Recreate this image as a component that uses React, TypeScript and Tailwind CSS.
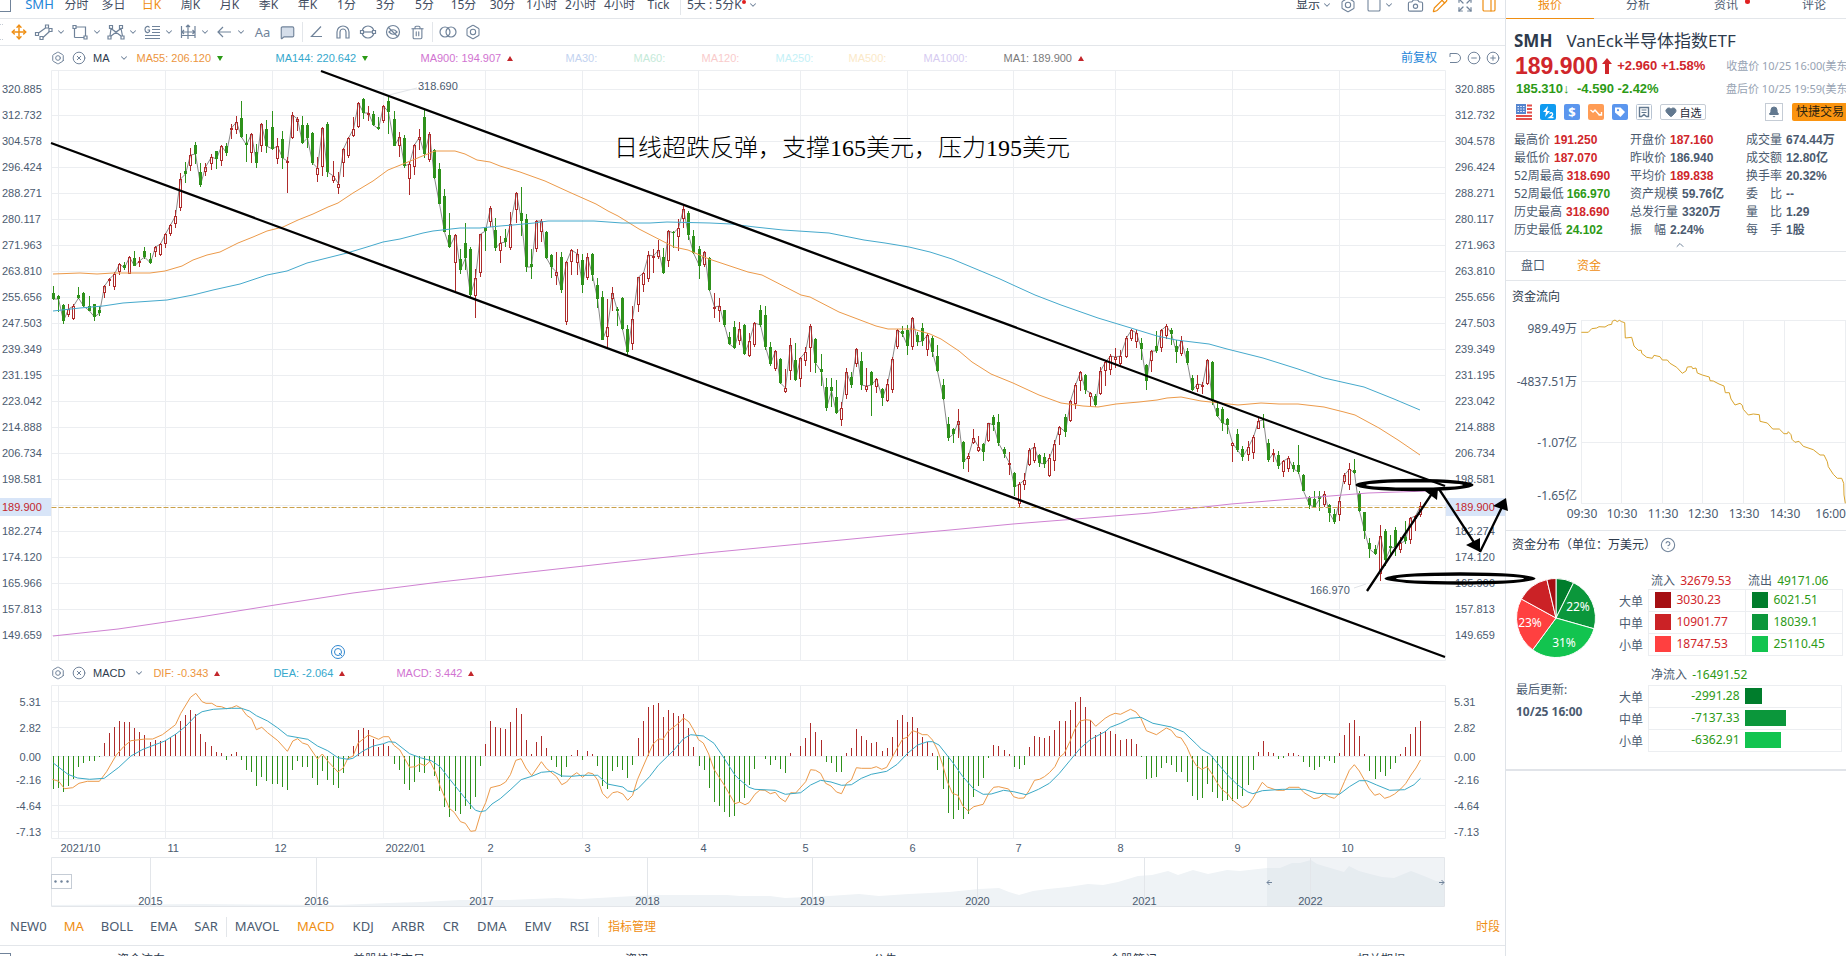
import type { ReactNode } from 'react'
import {
  Bell,
  Bolt,
  Camera,
  ChevronDown,
  ChevronUp,
  CircleMinus,
  CirclePlus,
  CircleQuestionMark,
  CircleX,
  Expand,
  Heart,
  MessageSquare,
  Move,
  PanelRight,
  Pencil,
  Square,
  Trash2,
} from 'lucide-react'

const STEP = 5.083
const LEFT = 51.5
const RIGHT = 1445.5
const ZERO = 756

const months = [
  { x: 58.5, label: '2021/10' },
  { x: 165.5, label: '11' },
  { x: 272.5, label: '12' },
  { x: 383.5, label: '2022/01' },
  { x: 485.5, label: '2' },
  { x: 582.5, label: '3' },
  { x: 698.5, label: '4' },
  { x: 800.5, label: '5' },
  { x: 907.5, label: '6' },
  { x: 1013.5, label: '7' },
  { x: 1115.5, label: '8' },
  { x: 1232.5, label: '9' },
  { x: 1339.5, label: '10' },
]

const prices = [
  '320.885', '312.732', '304.578', '296.424', '288.271', '280.117', '271.963', '263.810',
  '255.656', '247.503', '239.349', '231.195', '223.042', '214.888', '206.734', '198.581',
  '', '182.274', '174.120', '165.966', '157.813', '149.659',
]

const macdScale = [
  { y: 701.5, label: '5.31' },
  { y: 727.5, label: '2.82' },
  { y: 756.5, label: '0.00' },
  { y: 779.5, label: '-2.16' },
  { y: 805.5, label: '-4.64' },
  { y: 831.5, label: '-7.13' },
]

// direction, then high / body top / body bottom / low in thirds of a pixel under base
const sessions = [
  {
    base: 60,
    rows: `g679,699,718,720 g705,708,718,757 g733,735,782,791 r731,748,765,772 r731,739,776,781 g682,705,713,716
g696,698,737,740 g709,739,752,754 g731,732,772,784 g738,750,758,769 r675,679,698,713 r655,658,664,678
r637,641,680,689 r609,611,637,645 g605,616,623,630 r588,592,641,643 g573,594,617,619 r590,604,610,620
g562,573,592,598 g580,597,610,613 r558,562,577,592 r550,552,584,587 r518,523,553,565 r491,495,523,527
r450,469,493,503 r340,357,443,452 g306,334,341,368 r264,286,317,332 g246,255,282,311 g308,335,374,382
r310,321,336,347 r281,292,313,329 g273,273,296,326 r256,259,304,317 g249,258,278,287 r191,204,208,236
r168,187,211,221 g123,175,232,235 g222,248,254,305 r220,223,279,308 g252,276,310,323 r190,192,259,275
g181,208,258,278 g153,202,268,271 r235,259,298,312 g214,237,293,326 r290,304,310,398 r156,165,235,237
r172,178,185,212 g168,196,250,252 g190,195,234,265 g216,219,308,315 r290,325,344,365 r200,205,322,347
g187,192,335,350 r302,349,362,369 r337,371,385,402 r264,268,310,350 r231,235,287,293 r172,208,227,230
r126,129,200,203 g115,118,158,178 r138,159,166,182 g152,163,194,199 g171,200,206,209 r136,139,182,188
g106,123,155,222 g154,178,257,259 r217,230,259,290 g225,235,318,325 r306,313,356,406 r252,256,322,345
r208,231,241,270 g150,171,283,293 r216,223,301,307 g267,270,354,358 g310,328,431,432 g388,408,515,517
g460,526,560,564 r522,526,610,694 g568,597,629,643 g489,549,593,630 g562,567,705,710 r628,655,707,773
r521,523,638,652 g501,503,512,574 r439,444,485,502`,
  },
  {
    base: 160,
    rows: `g175,210,265,273 r229,250,274,308 g207,234,246,260 r156,193,263,270 r97,100,151,190 g80,158,184,227
g162,178,320,337 g267,313,321,356 r181,184,266,275 r178,184,217,245 g213,215,293,296 g281,284,320,355
r275,336,348,376 g277,291,390,399 r302,306,487,496 r267,271,307,344 r266,281,310,344 g281,299,374,398
r278,291,354,360 g280,283,346,363 g355,375,416,444 g394,411,539,541 r418,502,532,563 r382,399,418,452
g441,446,452,499 g412,414,506,509 g496,507,575,584 r437,478,552,571 r350,352,436,457 r335,338,376,396
r273,284,358,367 r266,289,295,340 r240,271,290,296 g263,291,338,341 r211,214,303,322 g213,216,220,263
r177,205,231,274 r139,147,178,205 g153,158,224,239 g210,227,280,283 g258,267,318,356 r273,276,316,320
g291,295,389,394 r399,440,445,473 r414,439,452,485 g449,451,496,500 g515,532,551,554 g483,500,563,567
r487,507,542,554 g492,494,581,584 r520,542,589,592 r486,489,554,562 g436,451,495,502 g438,464,560,570
g547,561,613,617 r571,574,628,634 g595,597,670,672 r628,683,697,700 r535,556,634,660 g550,599,659,663
r592,595,656,680 r562,577,604,619 r493,498,563,635 g535,537,610,640 g583,628,635,677 g655,680,745,754
g655,680,692,740 g660,711,758,761 r727,745,779,799 r623,636,704,718 g636,651,674,683 r563,568,613,622
g577,604,676,689 r623,677,691,697 g632,636,676,767 r653,658,681,700 g685,687,715,738 r657,671,724,727
r592,598,691,700 r507,511,562,566 g498,514,521,532 g496,511,557,586 r472,475,560,569 g516,526,545,557
g490,505,544,558 r520,525,571,589 g529,535,575,590 g556,588,634,637 g658,676,718,721 g771,793,835,842
g804,808,821,848 r747,784,796,833 g843,846,907,926 r878,889,898,935 r808,835,850,853 r827,862,874,877
g850,853,875,902 r788,790,842,847 g766,771,796,812 g763,787,850,857`,
  },
  {
    base: 280,
    rows: `g501,507,522,533 r516,549,556,585 g575,578,621,648 r606,611,671,680 r580,601,614,631 r505,510,555,558
r489,501,543,549 g521,526,549,560 g519,530,551,563 r523,535,587,590 r480,493,542,573 r438,441,465,495
g403,411,457,470 r360,363,424,427 r308,314,372,386 r273,276,304,333 g282,285,329,342 r336,340,350,378
g341,347,374,382 r261,273,341,344 r241,247,272,318 r222,229,271,284 r205,232,240,263 r210,228,253,257
r168,175,231,235 r146,151,178,184 r150,160,187,203 g174,188,208,239 g252,255,304,329 r210,213,243,276
g153,199,214,219 r147,151,203,217 r132,139,167,176 g144,150,163,195 g180,199,217,248 r168,183,221,227
g204,212,250,256 g286,293,329,334 r286,313,328,335 r305,316,322,342 r237,240,311,316 g243,245,363,375
g370,383,407,412 g381,386,430,454 g414,417,436,461 r486,490,499,545 g446,462,509,517 g497,507,532,544
r484,500,526,542 r466,470,519,536 r415,424,446,448 g403,417,420,443 g478,490,541,545 r507,519,526,545
g514,524,557,566 r540,544,575,590 r529,534,568,576 g547,555,566,577 g495,556,577,582 g583,586,632,634
g647,652,674,686 g634,658,680,682 g634,648,656,692 r634,643,676,681 g671,674,700,726 g686,702,727,732
r652,664,706,722 r580,586,607,612 r549,566,614,630 g538,570,579,582 g634,638,694,696 g697,697,754,776
g774,788,806,833 g796,808,821,826 r736,769,883,904 g748,752,841,858 g765,798,805,831 g742,750,802,829
r772,790,810,819 g723,770,783,791 r710,714,781,791 r705,709,716,754 r667,678,706,711`,
  },
]

const candles = sessions
  .flatMap(({ base, rows }) =>
    rows.split(/\s+/).map((row) => ({
      up: row[0] === 'r',
      y: row.slice(1).split(',').map((v) => Math.round(base + Number(v) / 3)),
    })),
  )
  .map((c, i) => ({ ...c, x: Math.round(53 + STEP * i) + 0.5 }))

const closeLine = candles.map((c) => `${c.x},${c.up ? c.y[1] : c.y[2]}`).join(' ')

const ma55 =
  '53,274 80,273 97,274 113,273 150,273 165,271 182,266 193,260 207,255 220,252 238,243 253,237 267,231 283,227 298,220 313,214 328,207 338,203 353,193 373,181 388,170 403,164 420,157 435,151 455,151 465,154 477,160 490,162 500,166 520,172 545,181 569,192 596,204 608,211 618,216 639,229 674,247 688,250 709,259 748,272 762,275 801,295 810,297 839,312 876,326 888,329 913,329 930,334 941,339 959,351 972,362 991,374 1013,383 1039,395 1061,403 1083,406 1098,407 1116,404 1139,402 1157,400 1167,398 1181,397 1201,401 1220,403 1238,405 1261,403 1279,404 1298,404 1324,407 1344,412 1355,415 1379,428 1398,440 1420,455'
const ma144 =
  '53,311 80,308 103,306 123,303 167,300 193,295 213,290 240,284 267,275 287,271 307,263 327,258 347,253 367,247 383,242 400,239 423,233 433,231 460,228 480,228 500,226 513,225 534,223 548,221 594,221 622,223 650,223 667,222 710,223 731,224 755,227 783,230 829,233 864,240 885,243 909,247 930,252 952,259 976,269 1000,279 1013,285 1035,295 1061,305 1098,318 1131,328 1157,336 1176,340 1209,344 1227,349 1263,358 1298,369 1324,378 1364,387 1394,399 1420,410'
const ma900 =
  '53,636 118,629 200,617 275,605 353,593 440,582 530,572 620,562 706,553 800,544 883,536 950,530 1013,524 1076,519 1150,513 1231,504 1305,498 1368,493 1427,491'

// one value per session, thirds of a pixel under y = 640
const histogram = `446 445 455 437 416 380 368 362 362 350 309 280 262 243 246 247 265 276 284 306 300 303 299 291 282 242 226
211 221 282 307 318 336 339 359 343 337 361 389 396 437 410 423 432 432 442 449 389 362 380 380 413 435 393 419 434
443 398 358 318 270 264 270 297 320 312 318 372 389 432 449 425 396 398 366 407 453 500 530 512 523 497 506 470 377
313 243 261 264 268 246 205 222 300 343 306 289 324 359 380 411 380 346 330 359 333 342 377 437 446 392 380 389 413
374 294 243 202 194 190 230 210 219 229 223 264 321 377 390 444 486 498 516 530 527 487 475 436 387 349 357 374 359
386 398 340 349 319 294 250 277 301 365 370 395 395 339 325 267 289 300 309 307 334 324 292 241 225 247 231 265 291
307 339 389 446 518 536 511 536 521 470 437 413 353 315 319 331 343 380 387 374 321 289 292 295 289 270 243 243 210
186 171 201 240 286 276 274 273 282 300 297 297 312 350 416 413 411 383 369 374 396 396 425 467 479 473 432 456 473
482 479 483 476 467 434 391 337 304 337 339 357 353 340 340 345 366 380 390 380 357 362 370 340 285 250 241 289 342
392 416 395 408 386 368 342 321 282 262 243`
  .split(/\s+/)
  .map((v) => Math.round(640 + Number(v) / 3))

const spread = (points: string, x0: number, kx: number, y0: number) =>
  points
    .split(' ')
    .map((p) => {
      const [x, y] = p.split(',').map(Number)
      return `${(x0 + x / kx).toFixed(1)},${(y0 + y / 3).toFixed(1)}`
    })
    .join(' ')

const dif =
  spread(
    '108,418 121,424 133,446 150,443 163,430 180,424 205,424 220,395 240,345 255,320 270,302 300,297 315,297 335,284 362,254 373,220 393,172 404,160 417,185 425,190 437,190 447,199 457,200 467,206 478,203 488,197 498,205 509,226 519,236 529,269 540,262 552,278 573,302 593,334 604,303 614,296 624,309 635,314 655,357 665,342 676,363 697,396 708,384 718,354 728,349 739,309 760,285 781,298 791,290 802,290 812,315 825,330 845,382 857,380 867,371 877,377 887,364 898,396 908,439 927,505 937,517 950,545 960,550 971,574 981,572 991,523 1002,488 1012,443 1032,436 1043,426 1053,404 1064,361 1075,356 1085,384 1097,407 1117,365 1127,385 1148,410 1159,434 1169,426 1179,409 1190,398 1202,412 1213,398 1223,401 1233,420 1243,460 1253,475 1264,458 1274,455 1285,462 1295,481 1305,466 1315,419 1337,345 1347,313 1358,297 1368,298 1378,274 1400,250 1410,234 1421,245 1431,270 1441,299 1451,309 1462,342 1473,388 1494,435 1516,491 1526,486',
    0, 2.063, 640,
  ) +
  ' ' +
  spread(
    '10,494 18,488 30,463 40,450 50,451 61,461 71,457 80,474 91,485 102,458 112,459 132,425 142,389 152,391 162,400 172,430 183,438 194,456 204,461 214,430 224,420 234,383 244,385 264,385 274,380 285,388 295,382 316,325 327,297 337,291 347,272 357,277 367,284 377,284 387,300 397,330 407,373 417,425 427,460 438,466 448,498 459,513 470,500 489,493 500,460 510,442 520,440 540,447 550,470 560,475 571,474 581,452 592,421 602,418 612,410 622,398 633,380 642,352 652,340 663,305 673,268 684,243 695,239 705,241 715,259 734,235 744,226 754,220 765,223 785,208 796,216 806,235 817,272 837,284 857,264 867,271 877,290 887,294 898,320 908,354 918,378 928,388 939,380 949,402 960,430 970,450 980,461 990,480 1010,503 1021,496 1031,475 1050,427 1060,441 1080,451 1094,451 1104,442 1124,442 1134,458 1154,476 1164,473 1174,461 1184,470 1195,475 1205,460 1215,425 1225,391 1235,374 1245,393 1265,446 1276,466 1286,461 1296,475 1306,470 1316,462 1328,447 1338,431 1349,405 1359,384 1368,360',
    740, 2.0103, 640,
  )

const dea =
  spread(
    '110,369 140,403 160,414 185,418 215,415 245,382 270,348 295,328 340,303 362,283 383,259 404,227 417,215 440,208 478,205 498,205 515,213 529,227 552,243 573,264 593,287 635,298 655,318 676,332 697,353 718,358 728,355 750,332 770,318 791,311 802,305 815,307 845,341 867,353 890,362 908,380 927,416 947,452 967,488 981,511 991,515 1002,512 1015,492 1032,476 1054,448 1075,419 1097,409 1117,397 1140,394 1159,408 1180,409 1202,406 1233,406 1253,432 1285,441 1295,453 1305,455 1316,446 1340,410 1358,376 1389,332 1410,296 1425,284 1451,288 1473,310 1494,355 1516,405',
    0, 2.063, 640,
  ) +
  ' ' +
  spread(
    '0,420 18,442 30,448 71,451 91,463 122,458 142,435 162,421 183,426 204,436 224,434 244,415 264,403 295,394 316,373 337,340 357,315 377,305 387,305 400,315 427,366 448,410 470,447 489,463 505,462 530,451 550,455 575,464 600,448 622,430 642,400 663,362 684,325 705,298 734,275 744,262 765,250 785,235 806,232 830,250 867,261 892,276 918,313 928,328 945,343 960,370 980,405 1000,434 1021,456 1031,461 1050,452 1090,448 1134,448 1160,460 1205,463 1225,440 1245,422 1260,422 1280,435 1306,451 1336,449 1355,434 1368,415',
    740, 2.0103, 640,
  )

const flowLine = spread(
  '244,157 265,157 275,146 290,144 297,140 315,141 325,135 335,133 337,124 345,120 352,125 358,121 365,125 374,128 376,174 395,172 402,198 415,211 424,211 425,220 440,232 457,235 462,226 480,230 487,240 502,240 510,250 530,262 547,280 558,273 562,261 575,260 578,266 588,264 592,279 607,285 628,291 630,302 640,303 657,312 672,318 676,338 688,338 693,357 705,375 720,370 727,376 730,388 745,405 760,402 778,404 780,424 802,429 818,447 838,447 852,461 862,461 865,455 873,464 876,478 885,487 897,484 910,499 940,509 960,525 972,525 982,545 985,560 1000,583 1012,595 1025,595 1031,610 1032,645 1036,670',
  -6, 3, 280,
)

const years = [
  { x: 150.5, label: '2015' },
  { x: 316.5, label: '2016' },
  { x: 481.5, label: '2017' },
  { x: 647.5, label: '2018' },
  { x: 812.5, label: '2019' },
  { x: 977.5, label: '2020' },
  { x: 1144.5, label: '2021' },
  { x: 1310.5, label: '2022' },
]

const history =
  '52,905 200,904 338,905 388,903 422,902 460,900 509,900 557,898 581,899 616,897 654,895 727,895 740,896 770,896 785,898 829,896 859,894 879,896 909,894 949,892 979,889 999,888 1009,892 1019,895 1033,891 1048,889 1068,887 1088,884 1103,885 1118,882 1138,876 1152,875 1168,871 1178,875 1193,870 1208,874 1227,870 1240,871 1267,868 1280,868 1292,863 1300,863 1311,860 1317,864 1327,867 1344,872 1349,866 1359,871 1370,874 1382,877 1394,878 1411,871 1424,876 1436,881 1445,881'

const periods = ['日K', '周K', '月K', '季K', '年K', '1分', '3分', '5分', '15分', '30分', '1小时', '2小时', '4小时', 'Tick']

const averages = [
  { text: 'MA55: 206.120', style: 'w-[139px] text-[#ec9540]', trend: 'down' },
  { text: 'MA144: 220.642', style: 'w-[145px] text-[#35a8cd]', trend: 'down' },
  { text: 'MA900: 194.907', style: 'w-[145px] text-[#d174d1]', trend: 'up' },
  { text: 'MA30:', style: 'w-[68px] text-[#c3d3f0]' },
  { text: 'MA60:', style: 'w-[68px] text-[#c5ead9]' },
  { text: 'MA120:', style: 'w-[74px] text-[#f9cbcb]' },
  { text: 'MA250:', style: 'w-[73px] text-[#c5f1f7]' },
  { text: 'MA500:', style: 'w-[75px] text-[#fbe9c8]' },
  { text: 'MA1000:', style: 'w-[80px] text-[#d6cbf1]' },
  { text: 'MA1: 189.900', style: 'text-[#7a7a7a]', trend: 'up' },
]

const macdLegend = [
  { text: 'DIF: -0.343', style: 'w-[120px] text-[#ec9540]' },
  { text: 'DEA: -2.064', style: 'w-[123px] text-[#35a8cd]' },
  { text: 'MACD: 3.442', style: 'text-[#d174d1]' },
]

const RED = 'text-[#d0262b]'
const GREEN = 'text-[#2c9a16]'
const SLATE = 'text-[#4b5b70]'

const quotes = [
  [
    { name: '最高价', gap: 'ml-1', value: '191.250', color: RED },
    { name: '最低价', gap: 'ml-1', value: '187.070', color: RED },
    { name: '52周最高', gap: 'ml-[3px]', value: '318.690', color: RED },
    { name: '52周最低', gap: 'ml-[3px]', value: '166.970', color: GREEN },
    { name: '历史最高', gap: 'ml-1', value: '318.690', color: RED },
    { name: '历史最低', gap: 'ml-1', value: '24.102', color: GREEN },
  ],
  [
    { name: '开盘价', gap: 'ml-1', value: '187.160', color: RED },
    { name: '昨收价', gap: 'ml-1', value: '186.940', color: SLATE },
    { name: '平均价', gap: 'ml-1', value: '189.838', color: RED },
    { name: '资产规模', gap: 'ml-1', value: '59.76亿', color: SLATE },
    { name: '总发行量', gap: 'ml-1', value: '3320万', color: SLATE },
    { name: '振　幅', gap: 'ml-1', value: '2.24%', color: SLATE },
  ],
  [
    { name: '成交量', gap: 'ml-1', value: '674.44万', color: SLATE },
    { name: '成交额', gap: 'ml-1', value: '12.80亿', color: SLATE },
    { name: '换手率', gap: 'ml-1', value: '20.32%', color: SLATE },
    { name: '委　比', gap: 'ml-1', value: '--', color: SLATE },
    { name: '量　比', gap: 'ml-1', value: '1.29', color: SLATE },
    { name: '每　手', gap: 'ml-1', value: '1股', color: SLATE },
  ],
]

const distribution = [
  { name: '大单', inflow: '3030.23', inColor: 'bg-[#a50f12]', outflow: '6021.51', outColor: 'bg-[#007d2c]' },
  { name: '中单', inflow: '10901.77', inColor: 'bg-[#cb2226]', outflow: '18039.1', outColor: 'bg-[#0b973b]' },
  { name: '小单', inflow: '18747.53', inColor: 'bg-[#ff4040]', outflow: '25110.45', outColor: 'bg-[#12c44f]' },
]

const netFlow = [
  { name: '大单', value: '-2991.28', bar: 'bg-[#007d2c]', width: 17 },
  { name: '中单', value: '-7137.33', bar: 'bg-[#0b973b]', width: 41 },
  { name: '小单', value: '-6362.91', bar: 'bg-[#12c44f]', width: 36 },
]

const pie = [
  { value: 6021.51, color: '#007d2c' },
  { value: 18039.1, color: '#0b973b' },
  { value: 25110.45, color: '#12c44f' },
  { value: 18747.53, color: '#ff4040' },
  { value: 10901.77, color: '#cb2226' },
  { value: 3030.23, color: '#a50f12' },
]

function Chevron() {
  return <ChevronDown className="size-[10px] shrink-0 text-[#70839a]" strokeWidth={2.5} />
}

function Trend({ up }: { up: boolean }) {
  return (
    <svg className="ml-[6px] inline-block h-[5px] w-[6px]" viewBox="0 0 6 5">
      {up ? <path d="M3 0 6 5H0Z" fill="#c3262b" /> : <path d="M0 0H6L3 5Z" fill="#2c9a16" />}
    </svg>
  )
}

function Tool({ label, children, menu }: { label: string; children: ReactNode; menu?: boolean }) {
  return (
    <button
      type="button"
      aria-label={label}
      className={menu ? 'flex w-9 shrink-0 items-center gap-[2px]' : 'flex w-[25px] shrink-0 items-center justify-center'}
    >
      {children}
      {menu && <Chevron />}
    </button>
  )
}

function Glyph({ children }: { children: ReactNode }) {
  return (
    <svg className="h-4 w-5 shrink-0" viewBox="0 0 20 16" fill="none" stroke="#70839a" strokeWidth="1.2">
      {children}
    </svg>
  )
}

function TopBar() {
  return (
    <div className="flex h-[19px] items-end overflow-hidden border-b border-[#e3e6ea]">
      <div className="flex h-[26px] w-full shrink-0 items-center text-[12px] text-[#3f4c5f]">
        <span className="-ml-px h-[14px] w-[12px] shrink-0 border border-[#70839a]" />
        <button type="button" className="ml-[10px] w-[37px] shrink-0 text-[13px] text-[#1f86d8]">SMH</button>
        <button type="button" className="w-[37px] shrink-0">分时</button>
        <button type="button" className="w-[37px] shrink-0">多日</button>
        {periods.map((period) => (
          <button
            type="button"
            key={period}
            className={period === '日K' ? 'w-[39px] shrink-0 text-[#ef8e12]' : 'w-[39px] shrink-0'}
          >
            {period}
          </button>
        ))}
        <span className="ml-[2px] h-5 w-px shrink-0 bg-[#e3e6ea]" />
        <button type="button" className="relative ml-[6px] flex shrink-0 items-center gap-[6px]">
          5天 : 5分K
          <Chevron />
          <span className="absolute top-1 right-3 size-[4px] rounded-full bg-[#e02020]" />
        </button>
        <div className="ml-auto flex shrink-0 items-center pr-[8px] text-[#70839a]">
          <button type="button" className="flex items-center gap-[2px] text-[#2d3a4c]">
            显示
            <Chevron />
          </button>
          <button type="button" aria-label="设置" className="ml-[8px]"><Bolt className="size-4" strokeWidth={1.6} /></button>
          <button type="button" aria-label="布局" className="ml-[10px] flex items-center gap-[2px]">
            <Square className="size-4" strokeWidth={1.6} />
            <Chevron />
          </button>
          <button type="button" aria-label="截图" className="ml-[13px]"><Camera className="size-[17px]" strokeWidth={1.6} /></button>
          <button type="button" aria-label="画线" className="ml-[8px]"><Pencil className="size-4 text-[#ef8e12]" strokeWidth={1.8} /></button>
          <button type="button" aria-label="全屏" className="ml-[9px]"><Expand className="size-4" strokeWidth={1.8} /></button>
          <button type="button" aria-label="侧栏" className="ml-[8px]"><PanelRight className="size-4 text-[#ef8e12]" strokeWidth={1.8} /></button>
        </div>
      </div>
    </div>
  )
}

function ToolBar() {
  return (
    <div className="flex h-[27px] items-center overflow-hidden border-b border-[#e3e6ea] text-[#70839a]">
      <span className="h-4 w-[3px] shrink-0 border-y border-dotted border-[#c5ccd5]" />
      <button type="button" aria-label="移动" className="mr-[3px] flex w-[28px] shrink-0 justify-center pl-[3px]">
        <Move className="size-4 text-[#ef8e12]" strokeWidth={2.2} />
      </button>
      <Tool label="线段" menu>
        <Glyph>
          <path d="M4.500 9 11.500 4M9 13.500 15.500 7.500" />
          <path d="M1.500 8.500h3v3h-3zM11.500 1h3v3h-3zM6 12.500h3v3H6zM15 4.500h3v3h-3z" />
        </Glyph>
      </Tool>
      <Tool label="形状" menu>
        <Glyph>
          <path d="M4.500 4.500v9M6 3h9.500v9M4.500 13.500H14" />
          <path d="M3 1.500h3v3H3zM14 12h3v3h-3z" />
        </Glyph>
      </Tool>
      <Tool label="形态" menu>
        <Glyph>
          <path d="M4 12 5 4.500 10 8 15 4.500 16.500 12M5 4.500 15 12M15 4.500 5 12" />
          <path d="M3.500 1.500h3v3h-3zM13.500 1.500h3v3h-3zM2 12h3v3H2zM15 12h3v3h-3z" />
        </Glyph>
      </Tool>
      <Tool label="斐波那契" menu>
        <Glyph>
          <path d="M10 2.500h8M10 5.500h8M10 8.500h8M3 11.500h15M3 14.500h15" />
          <path d="M7.500 3.500C6 1.500 3 2.500 3 5.500s3 4 4.500 2V6H5.500" />
        </Glyph>
      </Tool>
      <Tool label="测量" menu>
        <Glyph>
          <path d="M3.500 2v12M17 2v12M10 1v14M3.500 8H17M3 11.500h14M8 3l2-2 2 2M6 6 4 8l2 2M14.500 6l2 2-2 2" />
        </Glyph>
      </Tool>
      <Tool label="箭头" menu>
        <Glyph>
          <path d="M4 8h13M9 3 4 8l5 5" />
        </Glyph>
      </Tool>
      <button type="button" className="w-[25px] shrink-0 text-[13px] leading-4">Aa</button>
      <Tool label="标注"><MessageSquare className="size-[15px] fill-[#d5deea]" strokeWidth={1.8} /></Tool>
      <span className="mx-[2px] h-5 w-px shrink-0 bg-[#e3e6ea]" />
      <Tool label="角度"><Glyph><path d="M13 2.500 3.500 12.500H14" /></Glyph></Tool>
      <Tool label="磁吸">
        <Glyph><path d="M4 14V8a6 6 0 0 1 12 0v6h-3V8a3 3 0 0 0-6 0v6Z" /></Glyph>
      </Tool>
      <Tool label="连续画线">
        <Glyph>
          <circle cx="10" cy="8" r="6" />
          <path d="M5 8h10" />
          <path d="M2.500 6.500h3v3h-3zM14.500 6.500h3v3h-3z" fill="#fff" />
        </Glyph>
      </Tool>
      <Tool label="隐藏画线">
        <Glyph>
          <circle cx="10" cy="8" r="6.500" />
          <path d="M6 8q4-4.500 8 0-4 4.500-8 0ZM5 3l10 10" />
        </Glyph>
      </Tool>
      <Tool label="删除"><Trash2 className="size-[15px]" strokeWidth={1.8} /></Tool>
      <span className="mx-[2px] h-5 w-px shrink-0 bg-[#e3e6ea]" />
      <Tool label="叠加">
        <Glyph>
          <circle cx="7" cy="8" r="5" />
          <circle cx="13" cy="8" r="5" />
        </Glyph>
      </Tool>
      <Tool label="画线设置"><Bolt className="size-4" strokeWidth={1.6} /></Tool>
    </div>
  )
}

function LegendHead({ name }: { name: string }) {
  return (
    <>
      <button type="button" aria-label={`${name} 设置`} className="shrink-0"><Bolt className="size-[14px] text-[#70839a]" strokeWidth={1.7} /></button>
      <button type="button" aria-label={`关闭 ${name}`} className="ml-[7px] shrink-0"><CircleX className="size-[14px] text-[#70839a]" strokeWidth={1.7} /></button>
      <button type="button" className="ml-[7px] flex shrink-0 items-center gap-[9px] text-[#2d3a4c]">
        {name}
        <Chevron />
      </button>
    </>
  )
}

function PriceChart() {
  return (
    <svg
      className="block w-full overflow-visible"
      viewBox="0 70 1505 591"
      fontFamily="Liberation Sans, sans-serif"
      fontSize="11"
      fill="#4b5b70"
    >
      <g stroke="#eceef1">
        {months.map((m) => <path key={m.x} d={`M${m.x} 70V660`} />)}
        {prices.map((_, i) => <path key={i} d={`M${LEFT} ${89.5 + 26 * i}H${RIGHT}`} />)}
        <path d={`M${LEFT} 70.500H${RIGHT}V660.500H${LEFT}Z`} fill="none" />
      </g>
      {prices.map((price, i) => (
        <g key={i}>
          <text x="2" y={93 + 26 * i}>{price}</text>
          <text x="1455" y={93 + 26 * i}>{price}</text>
        </g>
      ))}
      <path d="M0 498H51V516H0ZM1446 498H1505V516H1446Z" fill="#d8e5f8" />
      <g fill="#c3262b">
        <text x="2" y="511">189.900</text>
        <text x="1455" y="511">189.900</text>
      </g>

      <polyline points={closeLine} fill="none" stroke="#8a8a8a" />
      {candles.map(({ up, x, y: [high, top, bottom, low] }) =>
        up ? (
          <g key={x} stroke="#ae2b2b" fill="none">
            <path d={`M${x} ${high}V${top}M${x} ${bottom}V${low}`} />
            <rect x={x - 1} y={top + 0.5} width="2" height={Math.max(bottom - top - 1, 1)} />
          </g>
        ) : (
          <g key={x} fill="#2e911b">
            <rect x={x - 0.5} y={high} width="1" height={low - high} />
            <rect x={x - 1.5} y={top} width="3" height={Math.max(bottom - top, 1)} />
          </g>
        ),
      )}
      <g fill="none">
        <polyline points={ma55} stroke="#ec9a4a" />
        <polyline points={ma144} stroke="#45a9cc" />
        <polyline points={ma900} stroke="#cf82d2" />
        <path d={`M${LEFT} 507.500H${RIGHT}`} stroke="#cba14a" strokeDasharray="5 2" />
        <path d="M389 95 417 88M1354 588 1366 584" stroke="#e1e4e8" />
      </g>
      <text x="418" y="90">318.690</text>
      <text x="1310" y="594">166.970</text>
      <g fill="none" stroke="#2f86cf">
        <circle cx="338" cy="652" r="6.500" />
        <circle cx="338" cy="652" r="3.500" />
        <path d="m339 653 3 3" />
      </g>

      <g stroke="#000" strokeWidth="2.300" fill="none">
        <path d="M321 71 1445 486M51 143 1445 657" />
        <path d="M1367 591 1433 492M1439 489 1477 547M1480 552 1503 505" />
      </g>
      <g fill="#000" fillRule="evenodd">
        <path d="M1438 488 1425 491 1437 500ZM1480 552 1466 545 1480 538ZM1506 498 1493 506 1508 511Z" />
        <path d="M1355.500 485a59 6.300 0 0 1 118 0a59 6.300 0 0 1-118 0ZM1366 485a48.500 2.600 0 0 0 97 0a48.500 2.600 0 0 0-97 0Z" />
        <path d="M1384.500 578.500a75.500 6.200 0 0 1 151 0a75.500 6.200 0 0 1-151 0ZM1396 578.500a64 2.700 0 0 0 128 0a64 2.700 0 0 0-128 0Z" />
      </g>
      <text
        x="614"
        y="156"
        fontSize="24"
        fontWeight="300"
        fill="#000"
        fontFamily="Liberation Serif, Noto Sans CJK SC, serif"
      >
        日线超跌反弹，支撑<tspan fontWeight="400">165</tspan>美元，压力<tspan fontWeight="400">195</tspan>美元
      </text>
    </svg>
  )
}

function MacdChart() {
  return (
    <svg
      className="block w-full"
      viewBox="0 685 1505 172"
      fontFamily="Liberation Sans, sans-serif"
      fontSize="11"
      fill="#4b5b70"
    >
      <g stroke="#eceef1">
        {months.map((m) => <path key={m.x} d={`M${m.x} 685V838`} />)}
        {macdScale.map((s) => <path key={s.y} d={`M${LEFT} ${s.y}H${RIGHT}`} />)}
        <path d={`M${LEFT} 685.500H${RIGHT}V838.500H${LEFT}Z`} fill="none" />
      </g>
      {macdScale.map((s) => (
        <g key={s.y}>
          <text x="41" y={s.y + 4} textAnchor="end">{s.label}</text>
          <text x="1454" y={s.y + 4}>{s.label}</text>
        </g>
      ))}
      {months.map((m) => <text key={m.x} x={m.x + 2} y="852">{m.label}</text>)}
      {histogram.map((y, i) => (
        <rect
          key={i}
          x={Math.round(53 + STEP * i)}
          y={Math.min(y, ZERO)}
          width="1"
          height={Math.abs(y - ZERO)}
          fill={y < ZERO ? '#ae2b2b' : '#2e911b'}
        />
      ))}
      <g fill="none">
        <polyline points={dif} stroke="#ec9a4a" />
        <polyline points={dea} stroke="#3ba9c6" />
      </g>
    </svg>
  )
}

function Navigator() {
  return (
    <svg
      className="block w-full"
      viewBox="0 857 1505 51"
      fontFamily="Liberation Sans, sans-serif"
      fontSize="11"
      fill="#4b5b70"
    >
      <polygon points={`${history} 1445,906 52,906`} fill="#eff3f6" />
      <rect x="1267" y="858" width="178" height="48" fill="#d9e1e9" fillOpacity="0.4" />
      <g stroke="#e3e6ea" fill="none">
        {years.map((y) => <path key={y.x} d={`M${y.x} 858V906`} />)}
        <path d={`M${LEFT} 857.500H${RIGHT - 1}V906.500H${LEFT}Z`} />
      </g>
      {years.map((y) => <text key={y.x} x={y.x} y="905" textAnchor="middle">{y.label}</text>)}
      <rect x="51.500" y="874.500" width="20" height="14" fill="#fff" stroke="#c5ccd5" />
      <g fill="#70839a">
        <circle cx="55.500" cy="881.500" r="1.200" />
        <circle cx="61.500" cy="881.500" r="1.200" />
        <circle cx="67.500" cy="881.500" r="1.200" />
      </g>
      <path d="M1272 882.500h-5m2.500-2.500-2.500 2.500 2.500 2.500M1439 882.500h5m-2.500-2.500 2.500 2.500-2.500 2.500" stroke="#70839a" fill="none" />
    </svg>
  )
}

function Indicators() {
  return (
    <div className="flex h-[37px] items-center overflow-hidden pr-[5px] pl-[10px] text-[13px] text-[#4b5b70]">
      <div className="flex items-center gap-[17px]">
        <button type="button">NEW0</button>
        <button type="button" className="text-[#ef8e12]">MA</button>
        <button type="button">BOLL</button>
        <button type="button">EMA</button>
        <button type="button">SAR</button>
      </div>
      <span className="mx-2 h-5 w-px bg-[#e3e6ea]" />
      <div className="flex items-center gap-[18px]">
        <button type="button">MAVOL</button>
        <button type="button" className="text-[#ef8e12]">MACD</button>
        <button type="button">KDJ</button>
        <button type="button">ARBR</button>
        <button type="button">CR</button>
        <button type="button">DMA</button>
        <button type="button">EMV</button>
        <button type="button">RSI</button>
      </div>
      <span className="mx-[9px] h-5 w-px bg-[#e3e6ea]" />
      <button type="button" className="shrink-0 text-[12px] text-[#ef8e12]">指标管理</button>
      <button type="button" className="ml-auto shrink-0 text-[12px] text-[#ef8e12]">时段</button>
    </div>
  )
}

function Badges() {
  return (
    <div className="mt-[3px] flex h-[18px] items-center pl-[10px] *:shrink-0">
      <svg className="size-4" viewBox="0 0 16 16">
        <path d="M11 1.500h5M11 5h5M11 8.500h5M0 12h16M0 15h16" stroke="#e2504c" strokeWidth="1.800" />
        <path d="M0 0h10v10H0z" fill="#5585cf" />
        <path d="M1.500 2.500h7M1.500 5h7M1.500 7.500h7" stroke="#fff" strokeWidth="1.200" strokeDasharray="1.400 1.400" />
      </svg>
      <svg className="ml-2 size-4" viewBox="0 0 16 16">
        <rect width="16" height="16" rx="2" fill="#0f9bf0" />
        <path d="M8 2 3 8h3l-1 5 5-6H7Z" fill="#fff" />
        <path d="M9.500 9.500q2-1.500 3 0T9.500 13.500H13.500" stroke="#fff" strokeWidth="1.300" fill="none" />
      </svg>
      <span className="ml-2 flex size-4 items-center justify-center rounded-xs bg-[#5b96ee] text-[13px] leading-4 font-bold text-white">$</span>
      <svg className="ml-2 size-4" viewBox="0 0 16 16">
        <rect width="16" height="16" rx="2" fill="#ff9c55" />
        <path d="M2.500 6 5 8l2-2 4 4.500 2.500.500M13.500 8v3h-3" stroke="#fff" strokeWidth="1.400" fill="none" />
      </svg>
      <span className="ml-2 flex size-4 items-center justify-center rounded-xs bg-[#5b96ee]">
        <svg className="size-3" viewBox="0 0 12 12">
          <path d="M1 1.500h5.500L11 6 6.500 11 1 6.500Z" fill="#fff" />
          <circle cx="4" cy="4.200" r="1.100" fill="#5b96ee" />
        </svg>
      </span>
      <svg className="ml-2 size-4" viewBox="0 0 16 16" fill="none">
        <rect x=".5" y=".5" width="15" height="15" rx="1" stroke="#b8c4d2" />
        <path d="M3.500 3.500h9v9h-2L8 10.500 5.500 12.500h-2Z" stroke="#62788f" strokeWidth="1.400" />
        <path d="M5.500 6h5M5.500 8.500h5" stroke="#62788f" />
      </svg>
      <button type="button" className="ml-2 flex h-4 w-[46px] items-center justify-center gap-[3px] rounded-xs border border-[#c5ccd5] text-[11px] leading-none text-[#1f2937]">
        <Heart className="size-3 fill-[#62788f] text-[#62788f]" />
        自选
      </button>
      <button type="button" aria-label="提醒" className="ml-[59px] flex size-[18px] items-center justify-center border border-[#c5ccd5]">
        <Bell className="size-3 fill-[#62788f] text-[#62788f]" />
      </button>
      <button type="button" className="ml-[9px] h-[18px] w-[64px] rounded-xs bg-[#fb9410] pl-1 text-left text-[12px] leading-[18px] text-[#2d2410]">
        快捷交易
      </button>
    </div>
  )
}

function Pie() {
  const total = pie.reduce((sum, s) => sum + s.value, 0)
  const at = (share: number) => {
    const angle = share * 2 * Math.PI
    return `${(40 + 39.5 * Math.sin(angle)).toFixed(2)} ${(40 - 39.5 * Math.cos(angle)).toFixed(2)}`
  }
  let run = 0
  return (
    <svg className="size-20" viewBox="0 0 80 80">
      {pie.map((slice) => {
        const start = at(run / total)
        run += slice.value
        return (
          <path key={slice.color} d={`M40 40 ${start}A39.500 39.500 0 0 1 ${at(run / total)}Z`} fill={slice.color} stroke="#fff" />
        )
      })}
      <g fill="#fff" fontSize="12" textAnchor="middle">
        <text x="62" y="33">22%</text>
        <text x="48" y="69">31%</text>
        <text x="14" y="49">23%</text>
      </g>
    </svg>
  )
}

function FlowChart() {
  return (
    <svg className="block h-[218px] w-full" viewBox="1500 312 340 218" preserveAspectRatio="xMinYMin" fontSize="12" fill="#4b5b70">
      <g transform="translate(1500)">
        <g stroke="#eceef1" fill="none">
          {[75.5, 115.5, 156.5, 196.5, 237.5, 278.5, 339.5].map((x) => <path key={x} d={`M${x} 320V503`} />)}
          {[320.5, 381.5, 442.5, 503.5].map((y) => <path key={y} d={`M75 ${y}H340`} />)}
        </g>
        <polyline points={flowLine} fill="none" stroke="#d9a42e" />
        <g textAnchor="end">
          <text x="71" y="333">989.49万</text>
          <text x="71" y="386">-4837.51万</text>
          <text x="71" y="447">-1.07亿</text>
          <text x="71" y="500">-1.65亿</text>
          <text x="340" y="518">16:00</text>
        </g>
        <g textAnchor="middle">
          <text x="76" y="518">09:30</text>
          <text x="116" y="518">10:30</text>
          <text x="157" y="518">11:30</text>
          <text x="197" y="518">12:30</text>
          <text x="238" y="518">13:30</text>
          <text x="279" y="518">14:30</text>
        </g>
      </g>
    </svg>
  )
}

function Distribution() {
  return (
    <div className="flex h-[210px] pt-[15px] pl-[9px] text-[12px] leading-4 text-[#4b5b70]">
      <div className="w-[101px] shrink-0">
        <div className="pt-[4px] pl-px">
          <Pie />
        </div>
        <p className="mt-[24px] pl-px">最后更新:</p>
        <p className="mt-[6px] pl-px font-bold">10/25 16:00</p>
      </div>
      <div className="shrink-0">
        <table className="w-[226px] table-fixed border-collapse">
          <thead>
            <tr className="h-[15px] leading-[14px]">
              <th className="w-[32px]" />
              <th className="w-[97px] p-0 pl-[3px] text-left font-normal">
                流入 <span className="ml-[2px] text-[#d0262b]">32679.53</span>
              </th>
              <th className="w-[97px] p-0 pl-[3px] text-left font-normal">
                流出 <span className="ml-[2px] text-[#2c9a16]">49171.06</span>
              </th>
            </tr>
          </thead>
          <tbody>
            {distribution.map((row) => (
              <tr key={row.name} className="h-[22px]">
                <th scope="row" className="p-0 pt-[4px] pl-[3px] text-left font-normal">{row.name}</th>
                <td className="border border-[#eceef1] p-0 pl-[6px] text-[#d0262b]">
                  <span className="flex items-center gap-[6px]">
                    <span className={`size-4 ${row.inColor}`} />
                    {row.inflow}
                  </span>
                </td>
                <td className="border border-[#eceef1] p-0 pl-[6px] text-[#2c9a16]">
                  <span className="flex items-center gap-[6px]">
                    <span className={`size-4 ${row.outColor}`} />
                    {row.outflow}
                  </span>
                </td>
              </tr>
            ))}
          </tbody>
        </table>
        <p className="mt-[11px] pl-[35px]">
          净流入 <span className="ml-[2px] text-[#2c9a16]">-16491.52</span>
        </p>
        <table className="mt-[2px] w-[226px] table-fixed border-collapse">
          <tbody>
            {netFlow.map((row) => (
              <tr key={row.name} className="h-[22px]">
                <th scope="row" className="w-[32px] p-0 pt-[4px] pl-[3px] text-left font-normal">{row.name}</th>
                <td className="border border-[#eceef1] p-0 text-[#2c9a16]">
                  <span className="flex items-center gap-[5px]">
                    <span className="w-[91px] text-right">{row.value}</span>
                    <span className={`h-4 ${row.bar}`} style={{ width: row.width }} />
                  </span>
                </td>
              </tr>
            ))}
          </tbody>
        </table>
      </div>
    </div>
  )
}

function QuotePanel() {
  return (
    <aside className="w-[341px] shrink-0 overflow-hidden border-l border-[#dfe3e8] text-[12px] text-[#4b5b70]">
      <div className="flex h-[19px] items-end border-b border-[#e3e6ea]">
        {['报价', '分析', '资讯', '评论'].map((tab) => (
          <button
            type="button"
            key={tab}
            className={
              tab === '报价'
                ? 'relative -mb-px h-[27px] w-[88px] shrink-0 border-b border-[#ef8e12] text-[#ef8e12]'
                : 'relative -mb-px h-[27px] w-[88px] shrink-0 border-b border-transparent'
            }
          >
            {tab}
            {tab === '资讯' && <span className="absolute top-[7px] right-5 size-[5px] rounded-full bg-[#e02020]" />}
          </button>
        ))}
      </div>

      <h1 className="mt-[10px] flex h-6 items-center gap-[14px] pl-2 text-[17px] whitespace-nowrap text-[#2d3a4c]">
        <b>SMH</b>
        <span>VanEck半导体指数ETF</span>
      </h1>
      <div className="mt-[1px] flex h-6 items-center pl-[9px] font-['Liberation_Sans'] font-bold text-[#d0262b]">
        <span className="text-[23px]">189.900</span>
        <svg className="ml-1 h-4 w-[10px] shrink-0" viewBox="0 0 10 16">
          <path d="M5 0 10 6H7V16H3V6H0Z" fill="currentColor" />
        </svg>
        <span className="ml-[5px] w-[109px] shrink-0 text-[13px]">+2.960 +1.58%</span>
        <span className="font-['Noto_Sans','Noto_Sans_CJK_SC',sans-serif] text-[11px] font-normal whitespace-nowrap text-[#97a3b3]">
          收盘价 10/25 16:00(美东)
        </span>
      </div>
      <div className="flex h-[22px] items-center pl-[10px] font-['Liberation_Sans'] text-[13px] font-bold text-[#2c9a16]">
        <span className="w-[61px] shrink-0">185.310↓</span>
        <span className="w-[149px] shrink-0">-4.590 -2.42%</span>
        <span className="font-['Noto_Sans','Noto_Sans_CJK_SC',sans-serif] text-[11px] font-normal whitespace-nowrap text-[#97a3b3]">
          盘后价 10/25 19:59(美东)
        </span>
      </div>
      <Badges />

      <div className="mt-[10px] flex pl-2 whitespace-nowrap">
        {quotes.map((column, i) => (
          <dl key={i} className="w-[116px] shrink-0">
            {column.map((q) => (
              <div key={q.name} className="flex h-[18px] items-center">
                <dt>{q.name}</dt>
                <dd className={`${q.gap} ${q.color} font-['Liberation_Sans','Noto_Sans_CJK_SC',sans-serif] font-bold`}>{q.value}</dd>
              </div>
            ))}
          </dl>
        ))}
      </div>
      <div className="flex h-[13px] justify-center border-b border-[#e3e6ea] pl-2">
        <button type="button" aria-label="收起"><ChevronUp className="size-3 text-[#70839a]" /></button>
      </div>

      <div className="flex h-[29px] items-center gap-8 border-b border-[#e3e6ea] pl-[15px]">
        <button type="button">盘口</button>
        <button type="button" className="text-[#ef8e12]">资金</button>
      </div>
      <h2 className="flex h-[31px] items-center pl-[6px] text-[#2d3a4c]">资金流向</h2>
      <FlowChart />
      <div className="flex h-[29px] items-center gap-1 border-t border-[#e3e6ea] pl-[6px] text-[#2d3a4c]">
        <h2>资金分布（单位：万美元）</h2>
        <CircleQuestionMark className="size-4 text-[#70839a]" strokeWidth={1.6} />
      </div>
      <Distribution />
      <div className="h-[2px] bg-[#e1e4e9]" />
    </aside>
  )
}

export default function App() {
  return (
    <div className="flex h-screen overflow-hidden bg-white font-['Noto_Sans','Noto_Sans_CJK_SC',sans-serif]">
      <main className="relative z-10 min-w-0 flex-1">
        <TopBar />
        <ToolBar />
        <div className="flex h-6 items-center pr-[5px] pl-[51px] font-['Liberation_Sans','Noto_Sans_CJK_SC',sans-serif] text-[11px] whitespace-nowrap">
          <LegendHead name="MA" />
          <div className="ml-[8px] flex">
            {averages.map((a) => (
              <span key={a.text} className={`shrink-0 ${a.style}`}>
                {a.text}
                {a.trend && <Trend up={a.trend === 'up'} />}
              </span>
            ))}
          </div>
          <button type="button" className="ml-auto text-[12px] text-[#1f86d8]">前复权</button>
          <button type="button" aria-label="还原" className="ml-[12px]">
            <svg className="h-[14px] w-3" viewBox="0 0 12 14" fill="none" stroke="#70839a">
              <path d="M1 2.500h6a4.500 4.500 0 0 1 0 9H1M1 6V2.500H4" />
            </svg>
          </button>
          <button type="button" aria-label="缩小" className="ml-[6px]"><CircleMinus className="size-[14px] text-[#70839a]" strokeWidth={1.7} /></button>
          <button type="button" aria-label="放大" className="ml-[5px]"><CirclePlus className="size-[14px] text-[#70839a]" strokeWidth={1.7} /></button>
        </div>
        <PriceChart />
        <div className="flex h-6 items-center pl-[51px] font-['Liberation_Sans','Noto_Sans_CJK_SC',sans-serif] text-[11px] whitespace-nowrap">
          <LegendHead name="MACD" />
          <div className="ml-[9px] flex">
            {macdLegend.map((m) => (
              <span key={m.text} className={`shrink-0 ${m.style}`}>
                {m.text}
                <Trend up />
              </span>
            ))}
          </div>
        </div>
        <MacdChart />
        <Navigator />
        <Indicators />
        <div className="flex h-7 items-center border-t border-[#e3e6ea] text-[12px] text-[#2d3a4c]">
          <span className="-ml-px h-[14px] w-3 shrink-0 border border-[#70839a]" />
          <div className="ml-[6px] grid flex-1 grid-cols-6">
            {['资金流向', '美股快捷交易', '资讯', '公告', '个股笔记', '相关期权'].map((tab) => (
              <button type="button" key={tab}>{tab}</button>
            ))}
          </div>
        </div>
      </main>
      <QuotePanel />
    </div>
  )
}
